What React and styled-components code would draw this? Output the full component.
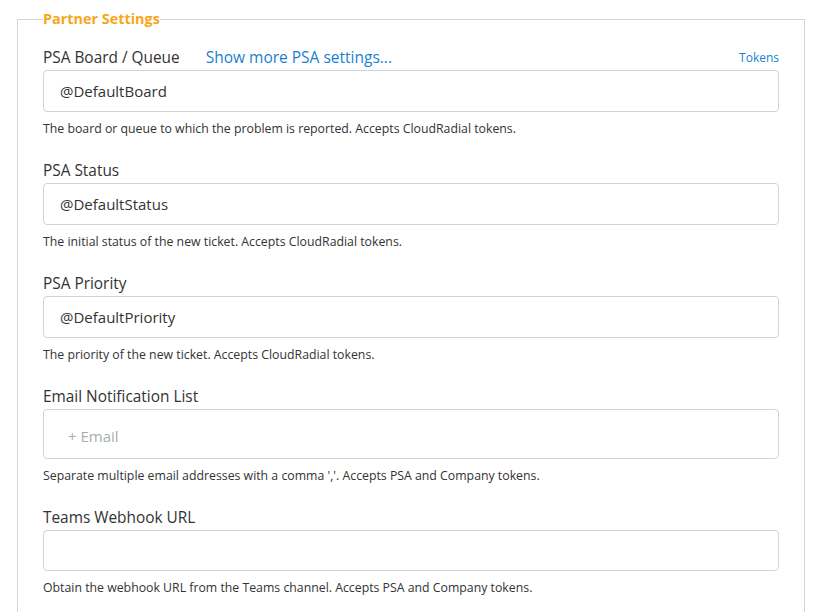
import styled, { createGlobalStyle } from "styled-components";

const Global = createGlobalStyle`
    body {
        margin: 0;
        background: #FFF;
        font-family: "Open Sans", "Noto Sans", sans-serif;
        color: #333;
    }
`
const Page = styled.div`
    padding: 0 21px 0 17px;
`
const Fieldset = styled.fieldset`
    margin: 8px 0 0 0;
    padding: 0 25px 40px 25px;
    border: 1px solid #d1d5da;
    border-bottom: none;
    min-width: 0;
`
const Legend = styled.legend`
    padding: 0;
    color: #f9a51a;
    font-weight: 700;
    font-size: 14.4px;
    line-height: 22px;
`
const Field = styled.div`
    margin-top: ${props => props.$first ? "15px" : "21px"};
`
const LabelRow = styled.div`
    display: flex;
    align-items: center;
    height: 24px;
    margin-bottom: 1px;
`
const Label = styled.label`
    font-size: 15.4px;
    color: #333;
`
const MoreLink = styled.a`
    font-size: 15.5px;
    color: #1a7fd1;
    margin-left: 26px;
    cursor: pointer;
`
const Tokens = styled.a`
    margin-left: auto;
    font-size: 12px;
    color: #1a7fd1;
    cursor: pointer;
`
const Input = styled.div`
    box-sizing: border-box;
    height: ${props => props.$h || 42}px;
    border: 1px solid #cfd4da;
    border-radius: 4px;
    display: flex;
    align-items: center;
    padding-left: ${props => props.$placeholder ? "24px" : "16px"};
    padding-top: ${props => props.$placeholder ? "3px" : "0"};
    font-size: 15px;
    color: ${props => props.$placeholder ? "#a9adb2" : "#333"};
`
const Help = styled.div`
    margin-top: 8px;
    font-size: 12.3px;
    line-height: 17px;
    color: #333;
`

const fields = [
    { label: "PSA Board / Queue", value: "@DefaultBoard", help: "The board or queue to which the problem is reported. Accepts CloudRadial tokens.", extra: true },
    { label: "PSA Status", value: "@DefaultStatus", help: "The initial status of the new ticket. Accepts CloudRadial tokens." },
    { label: "PSA Priority", value: "@DefaultPriority", help: "The priority of the new ticket. Accepts CloudRadial tokens." },
    { label: "Email Notification List", placeholder: "+ Email", h: 50, help: "Separate multiple email addresses with a comma ','. Accepts PSA and Company tokens." },
    { label: "Teams Webhook URL", value: "", h: 41, help: "Obtain the webhook URL from the Teams channel. Accepts PSA and Company tokens." },
]

export default function App() {
    return (
        <Page>
            <Global />
            <Fieldset>
                <Legend>Partner Settings</Legend>
                {fields.map((f, i) => (
                    <Field key={f.label} $first={i === 0}>
                        <LabelRow>
                            <Label>{f.label}</Label>
                            {f.extra && <MoreLink>Show more PSA settings...</MoreLink>}
                            {f.extra && <Tokens>Tokens</Tokens>}
                        </LabelRow>
                        <Input $h={f.h} $placeholder={!!f.placeholder}>
                            {f.placeholder || f.value}
                        </Input>
                        <Help>{f.help}</Help>
                    </Field>
                ))}
            </Fieldset>
        </Page>
    )
}
